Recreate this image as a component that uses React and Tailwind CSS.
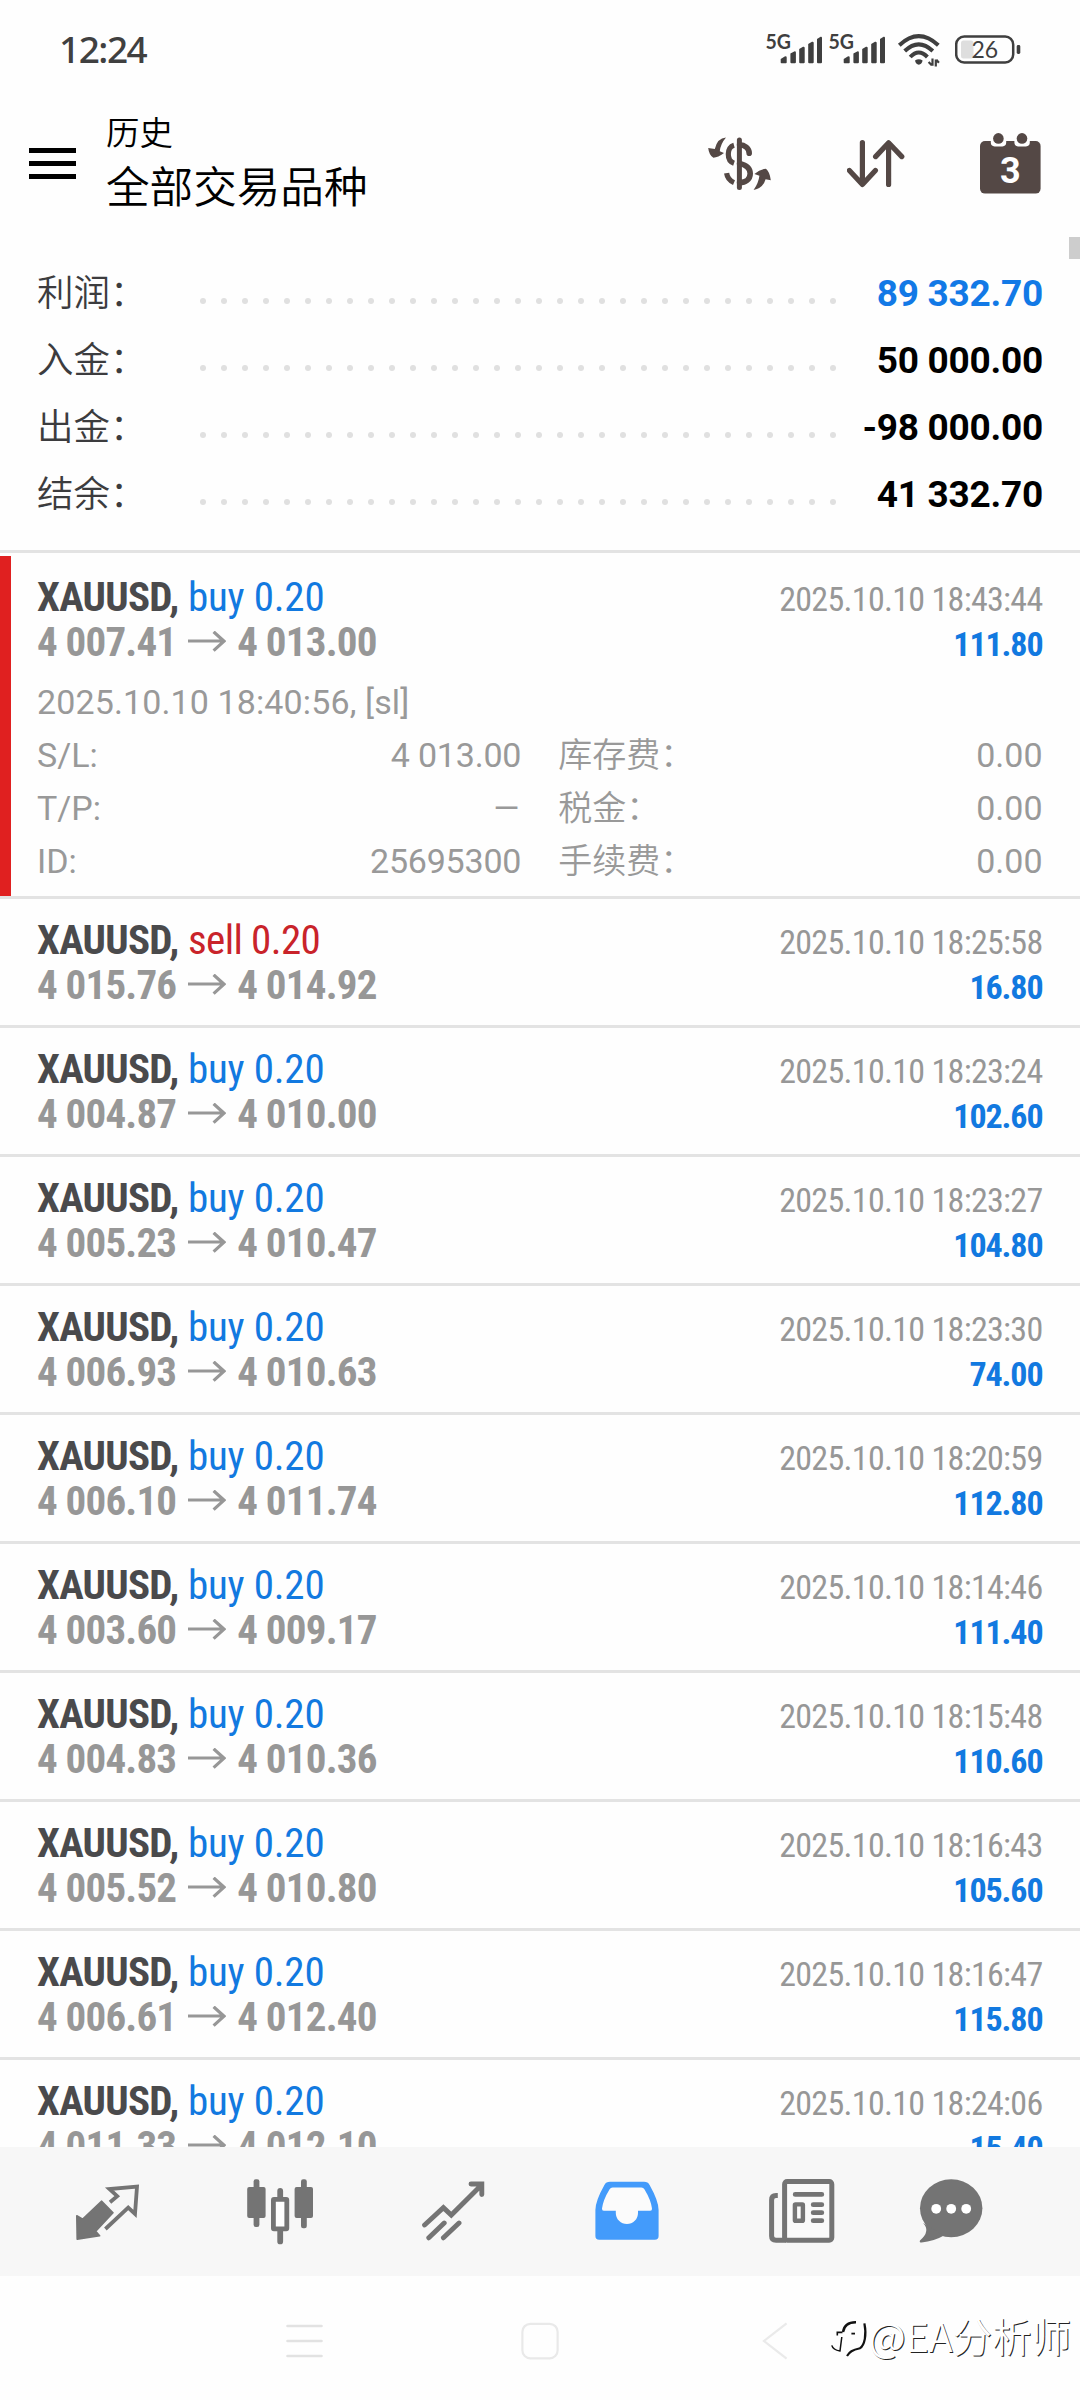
const SUMMARY = [
  { label: '利润：', value: '89 332.70', color: 'text-[#1279e6]' },
  { label: '入金：', value: '50 000.00', color: 'text-black' },
  { label: '出金：', value: '-98 000.00', color: 'text-black' },
  { label: '结余：', value: '41 332.70', color: 'text-black' },
];

const DOTS = Array.from({ length: 31 }, (_, i) => i);

const TRADES = [
  {
    side: 'buy', open: '4 007.41', close: '4 013.00', time: '2025.10.10 18:43:44', profit: '111.80',
    details: {
      opened: '2025.10.10 18:40:56, [sl]',
      rows: [
        ['S/L:', '4 013.00', '库存费：', '0.00'],
        ['T/P:', null, '税金：', '0.00'],
        ['ID:', '25695300', '手续费：', '0.00'],
      ],
    },
  },
  { side: 'sell', open: '4 015.76', close: '4 014.92', time: '2025.10.10 18:25:58', profit: '16.80' },
  { side: 'buy', open: '4 004.87', close: '4 010.00', time: '2025.10.10 18:23:24', profit: '102.60' },
  { side: 'buy', open: '4 005.23', close: '4 010.47', time: '2025.10.10 18:23:27', profit: '104.80' },
  { side: 'buy', open: '4 006.93', close: '4 010.63', time: '2025.10.10 18:23:30', profit: '74.00' },
  { side: 'buy', open: '4 006.10', close: '4 011.74', time: '2025.10.10 18:20:59', profit: '112.80' },
  { side: 'buy', open: '4 003.60', close: '4 009.17', time: '2025.10.10 18:14:46', profit: '111.40' },
  { side: 'buy', open: '4 004.83', close: '4 010.36', time: '2025.10.10 18:15:48', profit: '110.60' },
  { side: 'buy', open: '4 005.52', close: '4 010.80', time: '2025.10.10 18:16:43', profit: '105.60' },
  { side: 'buy', open: '4 006.61', close: '4 012.40', time: '2025.10.10 18:16:47', profit: '115.80' },
  { side: 'buy', open: '4 011.33', close: '4 012.10', time: '2025.10.10 18:24:06', profit: '15.40' },
];

function Signal() {
  return (
    <svg width="56" height="33" viewBox="0 0 56 33" fill="#3f3f3f" className="overflow-visible">
      <text x="-0.5" y="15.8" fontSize="20.5" fontWeight="700" textLength="25.5" lengthAdjust="spacingAndGlyphs" className="font-['Lato',sans-serif]">5G</text>
      <path d="M14.7 26l4-2.6q2-.6 2 1.2v5q0 .6-.8.6h-4.4q-.8 0-.8-.8zM24.4 20.6l3.8-2.2q1.7-.4 1.7 1.2v9.6q0 1-1 1h-3.5q-1 0-1-1zM33.2 16l3.8-2.2q1.7-.4 1.7 1.2v14.2q0 1-1 1h-3.5q-1 0-1-1zM42.2 11l3.8-2.2q1.7-.4 1.7 1.2v19.2q0 1-1 1h-3.5q-1 0-1-1zM51 6l3.6-2.2q1.4-.4 1.4 1.2v24.2q0 1-1 1h-3q-1 0-1-1z" />
    </svg>
  );
}

function Wifi() {
  return (
    <svg width="43" height="33" viewBox="0 0 43 33" fill="none" stroke="#3f3f3f" strokeWidth="4" className="overflow-visible">
      <path d="M1.3 12.2Q20.7-6 40.3 12.2M6.7 18Q20.7 4.6 34.8 18M12.2 24Q20.7 15 29.4 24" />
      <path d="M17 27.6q3.9-2.6 7.6 0q-.8 4-3.8 4.2q-3-.2-3.8-4.2z" fill="#3f3f3f" stroke="none" />
      <path d="M34.5 25.5v7.2M33.8 32.3l-3.2-3.4M37.8 33.4v-7M38.3 26.8l2.6 3" strokeWidth="2.2" />
    </svg>
  );
}

function Battery() {
  return (
    <svg width="66" height="33" viewBox="0 0 66 33">
      <rect x="1.2" y="3.5" width="57" height="26" rx="8" fill="none" stroke="#3f3f3f" strokeWidth="2.5" />
      <rect x="6" y="7.5" width="12.5" height="18" rx="2.5" fill="#dedede" />
      <rect x="61.7" y="12" width="3.6" height="9" rx="1.4" fill="#3f3f3f" />
      <text x="29.8" y="25.2" fontSize="23" textAnchor="middle" fill="#3f3f3f" className="font-['Lato',sans-serif]">26</text>
    </svg>
  );
}

function DollarRefresh() {
  return (
    <svg width="63" height="56" viewBox="0 0 63 56" fill="none" stroke="#544845" strokeWidth="5.6" strokeLinecap="round">
      <path d="M31.4 4v47.5" strokeWidth="5" />
      <path d="M41.2 17.2C41.2 12 36.5 8.8 31.6 8.8M31.6 27.4C38 29 42.2 31.8 42.2 37.6C42.2 43.6 37.4 46.6 31.6 46.6" />
      <path d="M26 9.2C18.6 11.2 18.2 24.5 26 27.2M18.6 37.2Q19.6 44 26 46.6" strokeWidth="5.2" strokeLinecap="butt" />
      <path d="M18 1.4Q9.2 2 6.8 13L.2 11.9Q1 19 5.4 21.8Q10 21.4 16 17L11.8 15.2Q12.4 8 18 1.4zM45.6 54Q55 52.4 57.6 43.2L62.8 44.2Q61.8 36 58 32.8Q52 33 46.4 38L51.4 39.8Q50.6 47 45.6 54z" fill="#544845" stroke="none" />
    </svg>
  );
}

function SortArrows() {
  return (
    <svg width="58" height="48" viewBox="0 0 58 48" fill="none" stroke="#544845" strokeWidth="5.2" strokeLinecap="round" strokeLinejoin="round">
      <path d="M15.4 2.6V44M2.4 30.4L15.4 44.4L28.4 30.4M41.6 44.4V3M28.6 16.6L41.6 2.8L54.8 16.6" />
    </svg>
  );
}

function Calendar() {
  return (
    <svg width="61" height="61" viewBox="0 0 61 61" fill="#544845">
      <rect y="8" width="60.6" height="52.6" rx="5" />
      <path d="M10.8 7h15.4v2.6q0 3.8-3.8 3.8h-7.8q-3.8 0-3.8-3.8zM34.4 7h15.4v2.6q0 3.8-3.8 3.8h-7.8q-3.8 0-3.8-3.8z" fill="#fff" />
      <circle cx="18.4" cy="5.4" r="5.3" />
      <circle cx="42" cy="5.4" r="5.3" />
      <text x="30.3" y="49.6" fontSize="36" fontWeight="700" textAnchor="middle" fill="#fff" className="font-['Roboto',sans-serif]">3</text>
    </svg>
  );
}

function LongArrow() {
  return (
    <svg width="38" height="22" viewBox="0 0 38 22" fill="none" stroke="#979797" strokeWidth="3.2" className="mx-[11.5px] shrink-0">
      <path d="M0 10h36M25.6 .8L36 10.2L25.6 19.6" />
    </svg>
  );
}

function TradeRow({ trade }) {
  const { side, open, close, time, profit, details } = trade;
  const body = (
    <>
      <div className="flex h-[45px] items-baseline justify-between text-[41px] leading-[45px] [font-stretch:75%]">
        <div>
          <span className="font-bold tracking-[-0.75px] text-[#4a4a4c]">XAUUSD,</span>{' '}
          <span className={side === 'buy' ? 'tracking-[-0.2px] text-[#1279e0]' : 'tracking-[-0.6px] text-[#c9232a]'}>{side} 0.20</span>
        </div>
        <div className="text-[34px] tracking-[-0.7px] text-[#979797]">{time}</div>
      </div>
      <div className="flex h-[45px] items-baseline justify-between text-[41px] leading-[45px] font-bold [font-stretch:75%]">
        <div className="flex items-center tracking-[-0.8px] text-[#979797]">
          <span>{open}</span>
          <LongArrow />
          <span>{close}</span>
        </div>
        <div className="text-[34px] tracking-[-1.1px] text-[#1279e0]">{profit}</div>
      </div>
    </>
  );

  if (!details) {
    return <div className="h-[129px] shrink-0 border-t-[3px] border-[#e3e3e3] pt-[18.5px] pr-[37.5px] pl-[37px]">{body}</div>;
  }

  return (
    <div className="h-[346px] shrink-0 border-t-[3px] border-[#e3e3e3] pt-[3px]">
      <div className="h-full border-l-[11px] border-[#e02020] pt-[18.5px] pr-[37.5px] pl-[26px]">
        {body}
        <div className="mt-[11.5px] text-[34px] leading-[53px] text-[#999]">
          <div className="tracking-[0.12px]">{details.opened}</div>
          {details.rows.map(([k1, v1, k2, v2]) => (
            <div key={k1} className="grid grid-cols-2 gap-x-[37px]">
              <div className="flex justify-between">
                <span>{k1}</span>
                {v1 ? <span className="tracking-[-0.2px]">{v1}</span> : <span className="origin-right scale-x-130">–</span>}
              </div>
              <div className="flex justify-between"><span className="font-[350]">{k2}</span><span>{v2}</span></div>
            </div>
          ))}
        </div>
      </div>
    </div>
  );
}

function TabBar() {
  return (
    <nav className="relative flex h-[129px] shrink-0 items-center bg-[#f7f7f7] pl-[76px] text-[#747474]">
      <svg width="64" height="66" viewBox="0 0 64 66">
        <path d="M25.7 22.2L37 33.7L19.7 52.3L23.6 56.8L1.2 60.2L.8 36.8L6.7 40.2z" fill="currentColor" stroke="currentColor" strokeWidth="1.6" strokeLinejoin="round" />
        <path d="M34 23.2L41.2 17.2L33.4 10L61 7.6L59 35L52.2 28.6L29.4 50" fill="none" stroke="currentColor" strokeWidth="3.8" />
      </svg>
      <svg width="66" height="66" viewBox="0 0 66 66" fill="currentColor" className="ml-[107px]">
        <rect x="6.6" y=".3" width="5.8" height="47.6" rx="2.2" />
        <rect x=".2" y="8" width="18.4" height="31" rx="2" />
        <rect x="54" y=".3" width="5.8" height="49" rx="2.2" />
        <rect x="47.6" y="8" width="18.4" height="31" rx="2" />
        <path d="M33.2 12v6M33.2 52v10.4" stroke="currentColor" strokeWidth="5.8" strokeLinecap="round" />
        <rect x="26.4" y="20.4" width="13.4" height="29.4" rx=".6" fill="#fff" stroke="currentColor" strokeWidth="4.8" />
      </svg>
      <svg width="64" height="66" viewBox="0 0 64 66" fill="none" stroke="currentColor" strokeWidth="4.9" strokeLinecap="round" className="ml-[109px]">
        <path d="M2.6 46L21.4 28.6L29.3 36L59 6.4M49 5H59.8V15.6M6.8 58.8L22.2 44M21.4 58.8L37 44" />
      </svg>
      <svg width="64" height="66" viewBox="0 0 64 66" fill="#439bfb" className="ml-[109px]">
        <path d="M15 2.7H49Q53 2.7 54.6 6Q63.6 22 63.6 31V57Q63.6 60.8 59.8 60.8H4.2Q.4 60.8 .4 57V31Q.4 22 9.4 6Q11 2.7 15 2.7z" />
        <path d="M17.6 8.4H46.4Q48.4 8.4 49.4 10.2Q56 21 57 29.6Q57.2 31.8 55.2 31.8H43V34A11.1 11.1 0 0 1 20.8 34V31.8H8.8Q6.8 31.8 7 29.6Q8 21 14.6 10.2Q15.6 8.4 17.6 8.4z" fill="#fbfbfb" />
      </svg>
      <svg width="67" height="66" viewBox="0 0 67 66" fill="none" stroke="currentColor" strokeWidth="5" className="ml-[109px]">
        <rect x="16.6" y="2.6" width="47.2" height="58.6" rx="2.6" fill="#fafafa" />
        <path d="M9.8 16.6H8Q3.6 16.6 3.6 21V57Q3.6 61.2 8 61.2H18" />
        <path d="M27.2 15.4H53.8M45.2 25.7H53.8M45.2 33.7H53.8M45.2 41.7H53.8" strokeLinecap="round" strokeWidth="4.8" />
        <rect x="26.9" y="25.4" width="8" height="16.4" rx=".6" strokeWidth="4.4" />
      </svg>
      <svg width="64" height="66" viewBox="0 0 64 66" fill="currentColor" className="ml-[84px]">
        <ellipse cx="32.2" cy="29.2" rx="31.2" ry="29" />
        <path d="M4 44Q12 52 1 61.4Q0 63.6 2.6 63.5Q15 62.4 25 56.6z" />
        <g fill="#fff"><circle cx="17.2" cy="29.8" r="4.9" /><circle cx="32.2" cy="29.8" r="4.9" /><circle cx="47.2" cy="29.8" r="4.9" /></g>
      </svg>
    </nav>
  );
}

function SystemNav() {
  return (
    <div className="relative flex h-[124px] shrink-0 items-center pt-1.5 pl-[286px]">
      <svg width="37" height="36" viewBox="0 0 37 36" stroke="#e2e2e2" strokeWidth="2.6" strokeLinecap="round">
        <path d="M1.5 3H35.5M1.5 18H35.5M1.5 33H35.5" />
      </svg>
      <svg width="38" height="38" viewBox="0 0 38 38" fill="none" stroke="#e9e9e9" strokeWidth="2.2" className="ml-[198px]">
        <rect x="1.4" y="1.8" width="35.2" height="34.6" rx="8" />
      </svg>
      <svg width="26" height="38" viewBox="0 0 26 38" fill="none" stroke="#eaeaea" strokeWidth="2.2" className="ml-[203px]">
        <path d="M24.6 1.4L2 19L24.6 36.6" />
      </svg>
      <div className="absolute top-[35px] right-[9px] flex items-center">
        <svg width="41" height="48" viewBox="0 0 41 48" fill="none" stroke="#111" className="translate-x-[3px] translate-y-1">
          <path d="M6.3 20.6V17.4H11.5" strokeWidth="1.6" />
          <path d="M12 17Q13.6 7 25 7.2" strokeWidth="2.4" />
          <path d="M20.4 18.6H24" strokeWidth="1.8" />
          <path d="M33.4 8.4C35.8 20 33.6 30 29 33.2C21 35 18.6 37 16 41" strokeWidth="2.2" />
          <path d="M10.8 22L9 36Q2 35 .8 30.4" strokeWidth="1.5" />
        </svg>
        <span className="font-['Noto_Sans_CJK_SC',sans-serif] text-[39.5px] leading-[48px] font-[350] text-white [text-shadow:1px_1px_0_#222]">@EA分析师</span>
      </div>
    </div>
  );
}

export default function App() {
  return (
    <div className="relative flex h-[2400px] w-[1080px] flex-col overflow-hidden bg-[#fefefe] font-['Roboto','Noto_Sans_CJK_SC',sans-serif]">
      <div className="flex h-[98px] shrink-0 items-center pr-[59px] pl-[59px]">
        <span className="mr-auto font-['Noto_Sans',sans-serif] text-[37px] leading-[98px] font-medium tracking-[-1.5px] text-[#404040]">12:24</span>
        <Signal />
        <div className="ml-[7px] flex"><Signal /></div>
        <div className="ml-[13px] flex"><Wifi /></div>
        <div className="ml-[14px] flex"><Battery /></div>
      </div>

      <header className="flex h-[131px] shrink-0 items-center pr-[39px] pl-[29px]">
        <div className="flex w-[47px] flex-col gap-2">
          <i className="h-[5px] bg-black" />
          <i className="h-[5px] bg-black" />
          <i className="h-[5px] bg-black" />
        </div>
        <div className="mt-px mr-auto ml-[30px] font-[350] text-black">
          <div className="text-[33.5px] leading-[50px]">历史</div>
          <div className="text-[43.6px] leading-[60px]">全部交易品种</div>
        </div>
        <DollarRefresh />
        <div className="ml-[76px]"><SortArrows /></div>
        <div className="ml-[75px]"><Calendar /></div>
      </header>

      <section className="h-[321px] shrink-0 pt-[31px] pr-[37px] pl-[37px]">
        {SUMMARY.map((row) => (
          <div key={row.label} className="flex items-center text-[37px] leading-[67px]">
            <span className="w-[163px] text-[36.5px] font-[350] whitespace-nowrap text-[#3c3c3e]">{row.label}</span>
            <span className="flex w-[636px] justify-between pt-3.5">
              {DOTS.map((d) => <i key={d} className="size-1.5 rounded-full bg-[#e0e0e0]" />)}
            </span>
            <span className={`flex-1 text-right font-bold tracking-[-0.25px] whitespace-nowrap ${row.color}`}>{row.value}</span>
          </div>
        ))}
      </section>

      <main className="flex min-h-0 flex-1 flex-col overflow-hidden">
        {TRADES.map((t) => <TradeRow key={t.time} trade={t} />)}
      </main>

      <TabBar />
      <SystemNav />
      <div className="absolute top-[237px] right-0 h-[22px] w-[11px] bg-[#cdcdcd]" />
    </div>
  );
}
